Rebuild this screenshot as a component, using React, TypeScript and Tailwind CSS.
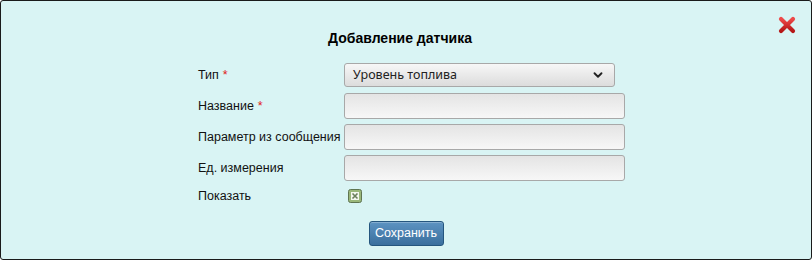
import { ChevronDown } from "lucide-react";

const fields = [
  { label: "Название", required: true },
  { label: "Параметр из сообщения", required: false },
  { label: "Ед. измерения", required: false },
];

function CloseIcon() {
  return (
    <svg width="18" height="18" viewBox="0 0 18 18">
      <defs>
        <linearGradient id="xg" x1="0" y1="0" x2="0" y2="1">
          <stop offset="0" stopColor="#ee4a4a" />
          <stop offset="1" stopColor="#b51616" />
        </linearGradient>
      </defs>
      <path d="M3 3 L15 15 M15 3 L3 15" stroke="url(#xg)" strokeWidth="4.2" strokeLinecap="round" />
    </svg>
  );
}

function CheckIcon() {
  return (
    <svg width="14" height="14" viewBox="0 0 14 14">
      <rect x="0.5" y="0.5" width="13" height="13" rx="2" fill="#9ab77a" stroke="#5f7551" />
      <rect x="3" y="3" width="8" height="8" fill="#f4f7ef" />
      <path d="M4.5 4.5 L9.5 9.5 M9.5 4.5 L4.5 9.5" stroke="#6b7f5c" strokeWidth="1.6" />
    </svg>
  );
}

function Label({ text, required }: { text: string; required?: boolean }) {
  return (
    <div className="w-[146px] shrink-0 text-[12.5px] text-[#111]">
      {text}
      {required && <span className="text-[#e02020] ml-1">*</span>}
    </div>
  );
}

export default function App() {
  return (
    <div className="relative w-[812px] h-[260px] border border-[#1a1a1a] rounded-[3px] bg-[#d9f4f4] flex flex-col" style={{ fontFamily: '"Liberation Sans", Arial, sans-serif' }}>
      <button className="absolute right-[15px] top-[15px]">
        <CloseIcon />
      </button>
      <h1 className="mt-[29px] mr-[12px] text-center text-[14px] leading-[16px] font-bold text-black">Добавление датчика</h1>

      <div className="ml-[197px] mt-[17px] flex flex-col">
        <div className="flex items-center">
          <Label text="Тип" required />
          <div className="w-[271px] h-[24px] rounded-[3px] border border-[#a8a8a8] bg-gradient-to-b from-[#f7f7f7] to-[#dcdcdc] flex items-center justify-between pl-[8px] pr-[9px]">
            <span className="text-[12.5px] text-[#222]" style={{ fontFamily: '"Noto Sans", "Open Sans", sans-serif' }}>Уровень топлива</span>
            <ChevronDown size={14} strokeWidth={3.2} className="text-[#222]" />
          </div>
        </div>

        {fields.map((f, i) => (
          <div key={f.label} className={`flex items-center ${i === 0 ? "mt-[6px]" : "mt-[5px]"}`}>
            <Label text={f.label} required={f.required} />
            <div className="w-[281px] h-[26px] rounded-[3px] border border-[#a8a8a8] bg-gradient-to-b from-[#e4e4e4] to-[#f7f7f7]" />
          </div>
        ))}

        <div className="flex items-center mt-[6px]">
          <Label text="Показать" />
          <div className="ml-[4px] flex">
            <CheckIcon />
          </div>
        </div>
      </div>

      <div className="mt-[15px] flex justify-center">
        <button className="h-[25px] px-[4px] w-[75px] rounded-[3px] border border-[#24557e] bg-gradient-to-b from-[#5c93c2] to-[#3a6f9d] text-white text-[12.5px] shadow-[inset_0_1px_0_rgba(255,255,255,0.25)]">
          Сохранить
        </button>
      </div>
    </div>
  );
}
